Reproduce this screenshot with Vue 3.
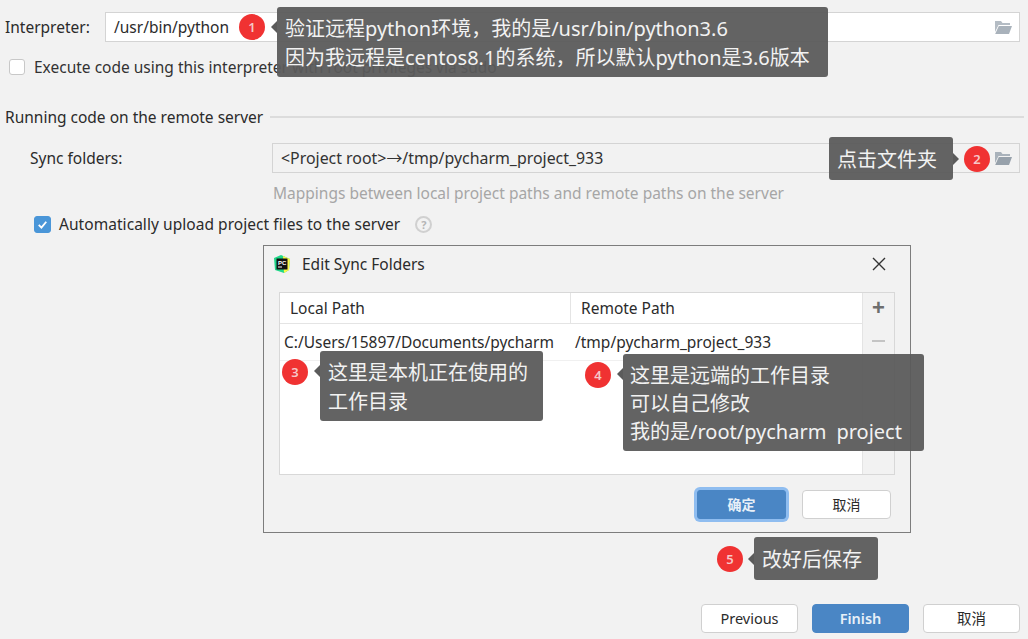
<script setup>
const notes = [
  { id: 1, cls: 'n1', lines: ['验证远程python环境，我的是/usr/bin/python3.6', '因为我远程是centos8.1的系统，所以默认python是3.6版本'] },
  { id: 2, cls: 'n2', lines: ['点击文件夹'] },
  { id: 3, cls: 'n3', lines: ['这里是本机正在使用的', '工作目录'] },
  { id: 4, cls: 'n4', lines: ['这里是远端的工作目录', '可以自己修改', '我的是/root/pycharm\u2002project'] },
  { id: 5, cls: 'n5', lines: ['改好后保存'] },
]
</script>

<template>
  <div class="page">
    <div class="row interp">
      <span class="lab">Interpreter:</span>
      <div class="field white">
        <span>/usr/bin/python</span>
        <svg class="folder" viewBox="0 0 18 16"><path d="M1 2h6l1.5 2H16v2H4.5L1 13z" fill="#b4bcc4"/><path d="M4.8 7H18l-3 8H1.2z" fill="#a9b2bb"/></svg>
      </div>
    </div>
    <label class="check-row root">
      <span class="box"></span>
      <span>Execute code using this interpreter with root privileges via sudo</span>
    </label>
    <div class="section"><span>Running code on the remote server</span><i></i></div>
    <div class="row sync">
      <span class="lab2">Sync folders:</span>
      <div class="field gray">
        <span>&lt;Project root&gt;→/tmp/pycharm_project_933</span>
        <svg class="folder" viewBox="0 0 18 16"><path d="M1 2h6l1.5 2H16v2H4.5L1 13z" fill="#a9b2bb"/><path d="M4.8 7H18l-3 8H1.2z" fill="#97a1ab"/></svg>
      </div>
    </div>
    <p class="hint">Mappings between local project paths and remote paths on the server</p>
    <label class="check-row auto">
      <span class="box on">
        <svg viewBox="0 0 18 18"><path d="M4.5 9.5l3.2 3.2 5.8-7" fill="none" stroke="#fff" stroke-width="2.2"/></svg>
      </span>
      <span>Automatically upload project files to the server</span>
      <span class="help">?</span>
    </label>
    <div class="footer">
      <button class="btn">Previous</button>
      <button class="btn primary">Finish</button>
      <button class="btn">取消</button>
    </div>

    <section class="dialog">
      <header class="dlg-head">
        <svg class="pc" viewBox="0 0 18 18">
          <path d="M1 3l7-3 9 4-1 11-5 3-9-3z" fill="#21d789"/>
          <path d="M10 1l7 3-1 11-5 3z" fill="#fcf84a"/>
          <rect x="3.5" y="3.5" width="11" height="11" fill="#111"/>
          <text x="5" y="9.5" class="pc-t">PC</text>
          <rect x="5" y="11.5" width="4" height="1" fill="#fff"/>
        </svg>
        <span>Edit Sync Folders</span>
        <svg class="close" viewBox="0 0 14 14"><path d="M1 1l12 12M13 1L1 13" stroke="#333" stroke-width="1.4"/></svg>
      </header>
      <div class="table">
        <div class="tbl-main">
          <div class="tr th"><span class="c1">Local Path</span><span class="c2">Remote Path</span></div>
          <div class="tr td"><span class="c1">C:/Users/15897/Documents/pycharm</span><span class="c2">/tmp/pycharm_project_933</span></div>
        </div>
        <div class="tools"><b class="plus">+</b><b class="minus"></b></div>
      </div>
      <div class="dlg-btns">
        <button class="btn sm primary focus">确定</button>
        <button class="btn sm">取消</button>
      </div>
    </section>

    <div v-for="n in notes" :key="n.id" class="note" :class="n.cls">
      <span class="dot">{{ n.id }}</span>
      <div class="tip"><div v-for="l in n.lines" :key="l">{{ l }}</div></div>
    </div>
  </div>
</template>

<style>
html, body { margin: 0; background: #f2f2f2; }
</style>

<style scoped>
.page {
  position: relative;
  box-sizing: border-box;
  width: 1028px;
  height: 639px;
  overflow: hidden;
  background: #f2f2f2;
  color: #2b2b2b;
  font: 15.5px/20px "Noto Sans", "Noto Sans CJK SC", sans-serif;
  display: flex;
  flex-direction: column;
  padding-top: 12px;
}
.row { display: flex; align-items: center; }
.interp { padding-left: 5px; }
.lab { width: 100px; }
.sync { padding-left: 30px; margin-top: 16px; }
.lab2 { width: 242px; }
.field {
  box-sizing: border-box;
  height: 30px;
  display: flex;
  align-items: center;
  justify-content: space-between;
  padding: 0 7px 1px 8px;
  border: 1px solid #d4d4d4;
}
.interp .field { width: 915px; }
.sync .field { width: 748px; font-size: 15.9px; }
.white { background: #fff; }
.gray { background: #f2f2f2; color: #333; }
.folder { width: 18px; height: 16px; margin-top: 1px; }
.check-row { display: flex; align-items: center; }
.root { padding-left: 9px; margin-top: 15px; gap: 9px; height: 20px; color: #333; }
.box {
  box-sizing: border-box;
  width: 16px;
  height: 16px;
  border: 1px solid #c8c8c8;
  border-radius: 3px;
  background: #fff;
  flex: none;
}
.box.on { width: 17px; height: 17px; background: #4a96d8; border-color: #4a96d8; display: flex; }
.box.on svg { width: 100%; height: 100%; }
.section {
  display: flex;
  align-items: center;
  gap: 7px;
  padding: 0 4px 0 5px;
  margin-top: 30px;
}
.section i { flex: 1; height: 2px; background: #dcdcdc; }
.hint { margin: 10px 0 0 273px; color: #a6a6a6; }
.auto { padding-left: 34px; margin-top: 11px; gap: 8px; letter-spacing: 0.05px; }
.help {
  box-sizing: border-box;
  width: 17px;
  height: 17px;
  margin-left: 7px;
  border: 2px solid #d0d0d0;
  border-radius: 50%;
  color: #b5b5b5;
  font-size: 11px;
  line-height: 13px;
  text-align: center;
  font-weight: 700;
}
.footer {
  margin-top: auto;
  margin-bottom: 6px;
  padding-right: 8px;
  display: flex;
  justify-content: flex-end;
  gap: 14px;
}
.btn {
  box-sizing: border-box;
  width: 97px;
  height: 29px;
  padding: 0;
  border: 1px solid #d0d0d0;
  border-radius: 4px;
  background: #fff;
  color: #2b2b2b;
  font: 14.5px/1 "Noto Sans", "Noto Sans CJK SC", sans-serif;
}
.btn.primary { background: #4a86c5; border-color: #4a86c5; color: #e8f0f8; font-weight: 600; }
.dialog {
  position: absolute;
  left: 263px;
  top: 245px;
  box-sizing: border-box;
  width: 648px;
  height: 288px;
  border: 1px solid #7d7d7d;
  background: #f2f2f2;
  display: flex;
  flex-direction: column;
  padding: 0 15px;
}
.dlg-head {
  display: flex;
  align-items: center;
  gap: 11px;
  height: 36px;
  margin: 0 -6px;
  flex: none;
  position: relative;
}
.pc { width: 18px; height: 18px; }
.pc-t { font: 700 6px/1 "Liberation Sans", sans-serif; fill: #fff; }
.close { width: 14px; height: 14px; margin-left: auto; margin-right: 15px; }
.table {
  margin-top: 10px;
  height: 183px;
  box-sizing: border-box;
  display: flex;
  border: 1px solid #d8d8d8;
  background: #fff;
  flex: none;
}
.tbl-main { flex: 1; min-width: 0; }
.tr { display: flex; align-items: center; }
.th { height: 30px; border-bottom: 1px solid #e4e4e4; }
.td { height: 37px; box-sizing: border-box; border-bottom: 1px solid #f0f0f0; }
.c1 { width: 291px; box-sizing: border-box; flex: none; }
.th .c1 { padding-left: 10px; height: 100%; line-height: 30px; border-right: 1px solid #e4e4e4; }
.th .c2 { padding-left: 10px; }
.td .c1 { padding-left: 4px; white-space: nowrap; }
.td .c2 { padding-left: 4px; }
.tools {
  width: 31px;
  flex: none;
  background: #f2f2f2;
  border-left: 1px solid #e4e4e4;
  display: flex;
  flex-direction: column;
  align-items: center;
  padding-top: 3px;
}
.plus { font: 700 22px/24px "Liberation Sans", sans-serif; color: #6e6e6e; }
.minus { width: 13px; height: 2px; background: #c4c4c4; margin-top: 20px; }
.dlg-btns {
  display: flex;
  justify-content: flex-end;
  align-items: center;
  gap: 16px;
  margin-top: 15px;
  padding-right: 4px;
}
.btn.sm { width: 89px; height: 29px; font-size: 14px; }
.btn.focus { box-shadow: 0 0 0 3px #8fbdf0; border-radius: 3px; }
.note { position: absolute; display: flex; align-items: center; }
.dot {
  width: 26px;
  height: 26px;
  border-radius: 50%;
  background: #f03232;
  color: #f6c8c8;
  font: 600 13px/26px "Noto Sans", sans-serif;
  text-align: center;
  flex: none;
}
.tip {
  position: relative;
  box-sizing: border-box;
  margin-left: 12px;
  padding: 2px 8px 0;
  background: rgba(91, 91, 91, 0.95);
  border-radius: 3px;
  color: #f2f2f2;
  font: 20px/29px "Noto Sans", "Noto Sans CJK SC", sans-serif;
  white-space: nowrap;
  display: flex;
  flex-direction: column;
  justify-content: center;
}
.tip::before {
  content: "";
  position: absolute;
  left: -6px;
  top: 50%;
  margin-top: -6px;
  border: 6px solid transparent;
  border-left: 0;
  border-right-color: #5b5b5b;
}
.n1 { left: 239px; top: 7px; }
.n1 .tip { width: 551px; height: 70px; }
.n1 .tip::before { top: 20px; }
.n1 .dot { margin-top: -30px; }
.n2 { left: 829px; top: 137px; flex-direction: row-reverse; }
.n2 .tip { width: 124px; height: 43px; margin: 0 11px 0 0; }
.n2 .tip::before { left: auto; right: -6px; border: 6px solid transparent; border-right: 0; border-left-color: #5b5b5b; }
.n3 { left: 282px; top: 351px; }
.n3 .tip { width: 223px; height: 70px; }
.n3 .tip::before { top: 20px; }
.n3 .dot { margin-top: -28px; }
.n4 { left: 585px; top: 354px; }
.n4 .tip { width: 301px; height: 97px; padding-left: 7px; line-height: 28px; }
.n4 .tip::before { top: 20px; }
.n4 .dot { margin-top: -55px; }
.n5 { left: 717px; top: 537px; }
.n5 .tip { width: 124px; height: 43px; margin-left: 11px; }
</style>
